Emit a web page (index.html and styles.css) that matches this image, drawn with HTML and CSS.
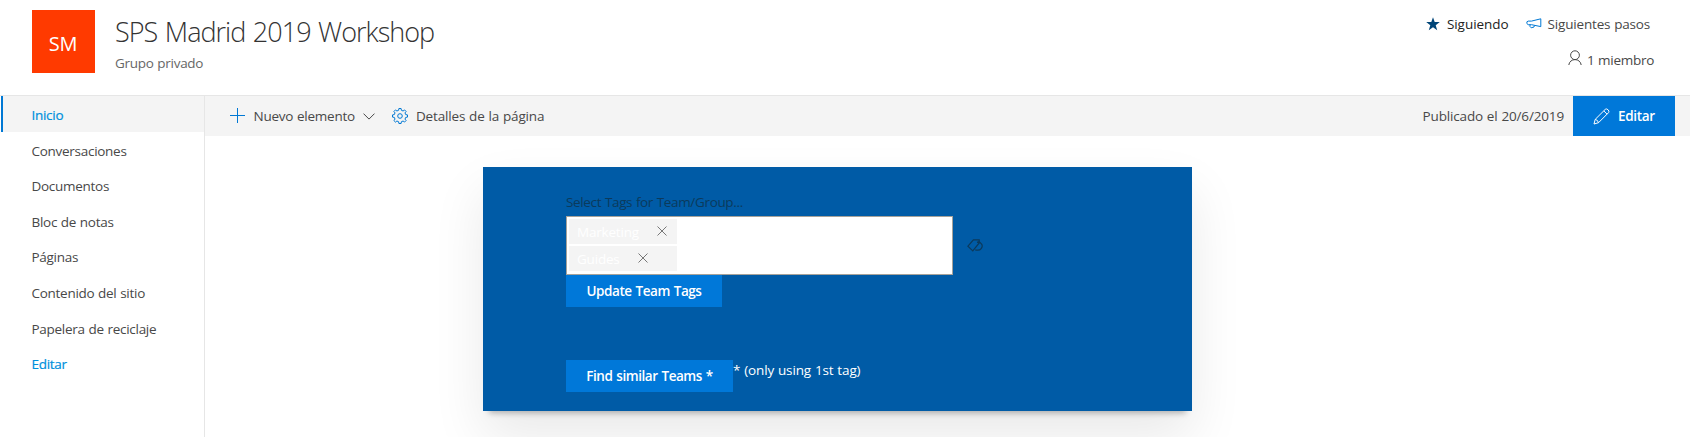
FILE: index.html
```
<!DOCTYPE html>
<html lang="es">
<head>
<meta charset="utf-8">
<title>SPS Madrid 2019 Workshop</title>
<link rel="stylesheet" href="styles.css">
</head>
<body>
<header class="site-header">
  <div class="site-logo">SM</div>
  <div class="site-info">
    <h1 class="site-title">SPS Madrid 2019 Workshop</h1>
    <p class="site-type">Grupo privado</p>
  </div>
  <div class="site-actions">
    <div class="action-row">
      <svg class="icon-star" viewBox="0 0 14 14"><path d="M7 0.3 8.7 5.1H13.8L9.7 8.2 11.2 13.3 7 10.2 2.8 13.3 4.3 8.2 0.2 5.1H5.3Z"/></svg>
      <span class="following">Siguiendo</span>
      <svg class="icon-megaphone" viewBox="0 0 16 12"><path d="M14.8 .8V8.6L5.5 6.7H2.2L.9 5.6V3.8L2.2 3.1H5.5ZM4 6.9V8.5L5.2 9.8 8 9 8.4 7.5"/></svg>
      <span class="next-steps">Siguientes pasos</span>
    </div>
    <div class="member-row">
      <svg class="icon-person" viewBox="0 0 14 16"><circle cx="7" cy="5.2" r="4.4"/><path d="M0.8 15C1.2 11.7 3.8 9.6 7 9.6S12.8 11.7 13.2 15"/></svg>
      <span class="members">1 miembro</span>
    </div>
  </div>
</header>
<div class="page">
  <nav class="side-nav">
    <a class="nav-item active">Inicio</a>
    <a class="nav-item">Conversaciones</a>
    <a class="nav-item">Documentos</a>
    <a class="nav-item">Bloc de notas</a>
    <a class="nav-item">Páginas</a>
    <a class="nav-item">Contenido del sitio</a>
    <a class="nav-item">Papelera de reciclaje</a>
    <a class="nav-item edit-link">Editar</a>
  </nav>
  <main class="content">
    <div class="command-bar">
      <svg class="icon-plus" viewBox="0 0 16 16"><path d="M7.5 0V15M0 7.5H15"/></svg>
      <span class="cmd-new">Nuevo elemento</span>
      <svg class="icon-chevron" viewBox="0 0 12 7"><path d="M0.5 0.6 6 6.1 11.5 0.6"/></svg>
      <svg class="icon-gear" viewBox="0 0 16 16"><path d="M6.6 2.3 6.9 .5H9.1L9.4 2.3 11.1 3 12.5 1.9 14.1 3.5 13 4.9 13.7 6.6 15.5 6.9V9.1L13.7 9.4 13 11.1 14.1 12.5 12.5 14.1 11.1 13 9.4 13.7 9.1 15.5H6.9L6.6 13.7 4.9 13 3.5 14.1 1.9 12.5 3 11.1 2.3 9.4 .5 9.1V6.9L2.3 6.6 3 4.9 1.9 3.5 3.5 1.9 4.9 3Z"/><circle cx="8" cy="8" r="2.3"/></svg>
      <span class="cmd-details">Detalles de la página</span>
      <span class="published">Publicado el 20/6/2019</span>
      <button class="edit-button">
        <svg class="icon-pencil" viewBox="0 0 17 17"><path d="M1 16 2.2 11.4 12.3 1.3Q13.7 .3 15.1 1.8T15.6 4.6L5.5 14.7ZM2.2 11.4Q4.8 11.8 5.5 14.7M10.8 2.9 14 6.1"/></svg>
        <span>Editar</span>
      </button>
    </div>
    <section class="card">
      <label class="field-label">Select Tags for Team/Group...</label>
      <div class="picker-row">
        <div class="tag-picker">
          <div class="tag"><span>Marketing</span><svg class="icon-close" viewBox="0 0 10 10"><path d="M.5 .5 9.5 9.5M9.5 .5 .5 9.5"/></svg></div>
          <div class="tag"><span>Guides</span><svg class="icon-close" viewBox="0 0 10 10"><path d="M.5 .5 9.5 9.5M9.5 .5 .5 9.5"/></svg></div>
        </div>
        <svg class="icon-tags" viewBox="0 0 16 13"><path d="M6.4 .9H12.2V4L5.8 11.9 .9 7.2ZM10 3.4 12.2 2.6M12.2 2.7 14.6 5.2Q16 7.2 14.2 9.6T8.2 10.8"/></svg>
      </div>
      <button class="primary update">Update Team Tags</button>
      <div class="find-row">
        <button class="primary find">Find similar Teams *</button>
        <span class="note">* (only using 1st tag)</span>
      </div>
    </section>
  </main>
</div>
</body>
</html>
```
FILE: styles.css
```
* { box-sizing: border-box; }
body {
  margin: 0;
  height: 437px;
  overflow: hidden;
  display: flex;
  flex-direction: column;
  background: #fff;
  color: #484848;
  font: 13.5px/20px "Open Sans", "Noto Sans", sans-serif;
  letter-spacing: -.28px;
  word-spacing: .5px;
}
h1, p { margin: 0; }
svg { fill: none; stroke: currentColor; flex: none; }
button {
  border: 0;
  padding: 0;
  font: inherit;
  font-weight: 600;
  letter-spacing: -.44px;
  word-spacing: .8px;
  color: #fff;
  background: #0078d9;
}
.site-header {
  display: flex;
  flex: none;
  height: 96px;
  border-bottom: 1px solid #e6e6e6;
  padding: 10px 36px 0 32px;
}
.site-logo {
  width: 63px;
  height: 63px;
  background: #ff3a00;
  color: #fff;
  font-size: 20px;
  line-height: 67px;
  text-align: center;
  padding-right: 1px;
}
.site-info { margin-left: 20px; }
.site-title {
  font-size: 27px;
  font-weight: 300;
  line-height: 43px;
  letter-spacing: -.98px;
  word-spacing: 1.5px;
  color: #333;
  white-space: nowrap;
}
.site-type { color: #666; }
.site-actions { margin-left: auto; }
.action-row, .member-row { display: flex; align-items: center; white-space: nowrap; }
.action-row { margin-top: 4px; padding-right: 4px; }
.member-row { justify-content: flex-end; margin-top: 16px; }
.icon-star { width: 14px; height: 14px; fill: #004578; stroke: none; margin-right: 7px; }
.following { color: #222; letter-spacing: -.04px; }
.next-steps { letter-spacing: -.18px; }
.icon-megaphone { width: 16px; height: 12px; color: #0078d4; margin: 0 6px 0 17px; }
.icon-person { width: 14px; height: 16px; margin: -4px 5px 0 0; }
.page { display: flex; flex: 1; min-height: 0; }
.side-nav { width: 205px; flex: none; border-right: 1px solid #e6e6e6; padding-left: 1px; }
.nav-item { display: block; height: 35.6px; line-height: 38px; padding-left: 30.5px; }
.active { background: #f4f4f4; border-left: 2px solid #0078d4; padding-left: 28.5px; }
.active, .edit-link { color: #0090dc; font-weight: 500; -webkit-text-stroke: .2px; }
.content { flex: 1; }
.command-bar {
  display: flex;
  align-items: center;
  position: relative;
  z-index: 1;
  height: 40px;
  padding: 0 15px 0 24.5px;
  background: #f4f4f4;
  letter-spacing: -.15px;
  white-space: nowrap;
}
.icon-plus { width: 16px; height: 16px; color: #0078d4; margin-right: 8px; }
.cmd-new { letter-spacing: -.24px; }
.icon-chevron { width: 12px; height: 7px; margin: 0 17px 0 8px; }
.icon-gear { width: 16px; height: 16px; color: #0078d4; margin-right: 8px; }
.published { margin-left: auto; margin-right: 9px; }
.edit-button { display: flex; align-items: center; width: 102px; height: 40px; padding-left: 20px; letter-spacing: -.3px; }
.icon-pencil { width: 17px; height: 17px; margin-right: 8px; }
.card {
  width: 709px;
  height: 244px;
  margin: 31px 0 0 278px;
  padding: 25px 0 0 83px;
  background: #005ba6;
  box-shadow: 0 25px 50px rgba(0, 0, 0, .09), 0 8px 6px -6px rgba(0, 0, 0, .28);
}
.field-label { display: block; height: 24px; color: #0b3a5c; letter-spacing: -.34px; }
.picker-row { display: flex; align-items: center; }
.tag-picker { width: 387px; height: 59px; border: 1px solid #a6a29a; background: #fff; padding: 2px; }
.tag {
  display: flex;
  align-items: center;
  width: 108px;
  height: 25px;
  margin-bottom: 2px;
  padding-left: 8px;
  background: #f4f4f4;
  color: #fff;
  letter-spacing: -.2px;
}
.icon-close { width: 10px; height: 10px; color: #777; margin: -2px 0 0 18px; }
.icon-tags { width: 16px; height: 13px; color: #0b3a5c; stroke-width: 1.2; margin-left: 14px; }
.primary { display: block; height: 32px; text-align: center; }
.update { width: 156px; }
.find { width: 167px; }
.find-row { display: flex; margin-top: 53px; color: #fff; }
.note { letter-spacing: -.13px; }
```
